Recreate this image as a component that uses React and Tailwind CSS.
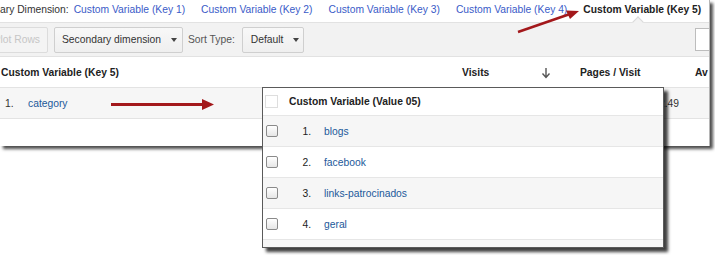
const topLinks = [
  "Custom Variable (Key 1)",
  "Custom Variable (Key 2)",
  "Custom Variable (Key 3)",
  "Custom Variable (Key 4)",
];

const values = [
  { n: "1.", label: "blogs", shade: true },
  { n: "2.", label: "facebook", shade: false },
  { n: "3.", label: "links-patrocinados", shade: true },
  { n: "4.", label: "geral", shade: false },
];

const Caret = () => (
  <span className="ml-[10px] inline-block h-0 w-0 border-x-[3px] border-t-[4px] border-x-transparent border-t-[#444]" />
);

const Checkbox = () => (
  <span className="box-border block h-[12px] w-[12px] rounded-[2px] border border-[#8a8a8a] bg-gradient-to-b from-white to-[#e6e6e6]" />
);

const App = () => {
  return (
    <div className="relative h-[255px] w-[715px] overflow-hidden bg-white font-['Liberation_Sans',Arial,sans-serif] text-[10.3px] text-[#222]">
      {/* main report panel */}
      <div className="relative box-border h-[146px] w-[710px] overflow-hidden border-r border-[#b5b5b5] bg-white shadow-[3px_3px_3px_rgba(0,0,0,0.7)]">
        <div className="flex h-[22px] items-center whitespace-nowrap pb-[3px]">
          <span className="text-[#333]">ary Dimension:</span>
          <div className="ml-[5px] flex gap-[16px] text-[#3a5bc8]">
            {topLinks.map((l) => (
              <span key={l}>{l}</span>
            ))}
            <span className="font-bold text-[#222]">Custom Variable (Key 5)</span>
          </div>
        </div>

        <div className="relative flex h-[35px] items-center gap-[6px] whitespace-nowrap border-y border-[#e2e2e2] bg-[#f2f2f2]">
          <span className="ml-[-14px] box-border flex h-[26px] w-[62px] items-center justify-end rounded-[2px] border border-[#dcdcdc] bg-[#f4f4f4] pr-[7px] pt-[1px] text-[#c6c6c6]">
            Plot Rows
          </span>
          <span className="box-border flex h-[26px] w-[129px] items-center rounded-[2px] border border-[#cfcfcf] bg-gradient-to-b from-[#f8f8f8] to-[#efefef] pl-[7px] pt-[1px] text-[#333]">
            Secondary dimension
            <Caret />
          </span>
          <span className="ml-[-1px] pt-[1px] text-[#555]">Sort Type:</span>
          <span className="ml-[1px] box-border flex h-[26px] w-[62px] items-center rounded-[2px] border border-[#cfcfcf] bg-gradient-to-b from-[#f8f8f8] to-[#efefef] pl-[8px] pt-[1px] text-[#333]">
            Default
            <Caret />
          </span>
          <span className="ml-auto mr-[-20px] box-border block h-[23px] w-[34px] border border-[#bdbdbd] bg-white" />
          <span className="absolute left-[634px] top-[-5px] block h-[8px] w-[8px] rotate-45 border-l border-t border-[#dadada] bg-[#f2f2f2]" />
        </div>

        <div className="flex h-[30px] items-center whitespace-nowrap pt-[2px] font-bold text-[#222]">
          <span className="w-[462px] pl-[1px]">Custom Variable (Key 5)</span>
          <span className="w-[76px]">Visits</span>
          <span className="w-[42px] pl-[3px] font-normal text-[#666]">
            <svg width="10" height="12" viewBox="0 0 10 12" className="block">
              <path d="M5 1v9M1.5 6.5L5 10.5l3.5-4" fill="none" stroke="#555" strokeWidth="1.4" />
            </svg>
          </span>
          <span className="w-[115px]">Pages / Visit</span>
          <span>Av</span>
        </div>

        <div className="flex h-[32px] items-center whitespace-nowrap border-y border-[#e3e3e3] bg-[#f6f6f6] pt-[2px]">
          <span className="w-[28px] pl-[5px] text-[#333]">1.</span>
          <span className="w-[631px] text-[#22599a]">category</span>
          <span className="text-[#333]">2.49</span>
        </div>
      </div>

      {/* value drop-down overlay */}
      <div className="absolute left-[262px] top-[87px] box-border h-[161px] w-[402px] overflow-hidden border border-[#5a5a5a] bg-white shadow-[4px_4px_3px_rgba(0,0,0,0.75)]">
        <div className="flex h-[28px] items-center whitespace-nowrap border-b border-[#e6e6e6]">
          <span className="ml-[2px] box-border block h-[13px] w-[13px] border border-[#dedede] bg-white" />
          <span className="ml-[11px] font-bold">Custom Variable (Value 05)</span>
        </div>
        {values.map((v) => (
          <div
            key={v.label}
            className={`flex h-[31px] items-center whitespace-nowrap border-b border-[#e6e6e6] ${v.shade ? "bg-[#f6f6f6]" : "bg-white"}`}
          >
            <span className="ml-[3px]">
              <Checkbox />
            </span>
            <span className="w-[33px] pt-[1px] text-right text-[#222]">{v.n}</span>
            <span className="ml-[13px] pt-[1px] text-[#22599a]">{v.label}</span>
          </div>
        ))}
        <div className="h-[10px] bg-[#f6f6f6]" />
      </div>

      {/* annotation arrows */}
      <svg
        className="pointer-events-none absolute left-0 top-0"
        width="715"
        height="255"
        viewBox="0 0 715 255"
      >
        <line x1="111" y1="104.5" x2="205" y2="104.5" stroke="#a3181b" strokeWidth="3" />
        <polygon points="214,104.5 202,99 202,110" fill="#a3181b" />
        <line x1="518" y1="32" x2="570" y2="14" stroke="#a3181b" strokeWidth="2.6" />
        <polygon points="579,11 566,10.5 570,19" fill="#a3181b" />
      </svg>
    </div>
  );
};

export default App;
